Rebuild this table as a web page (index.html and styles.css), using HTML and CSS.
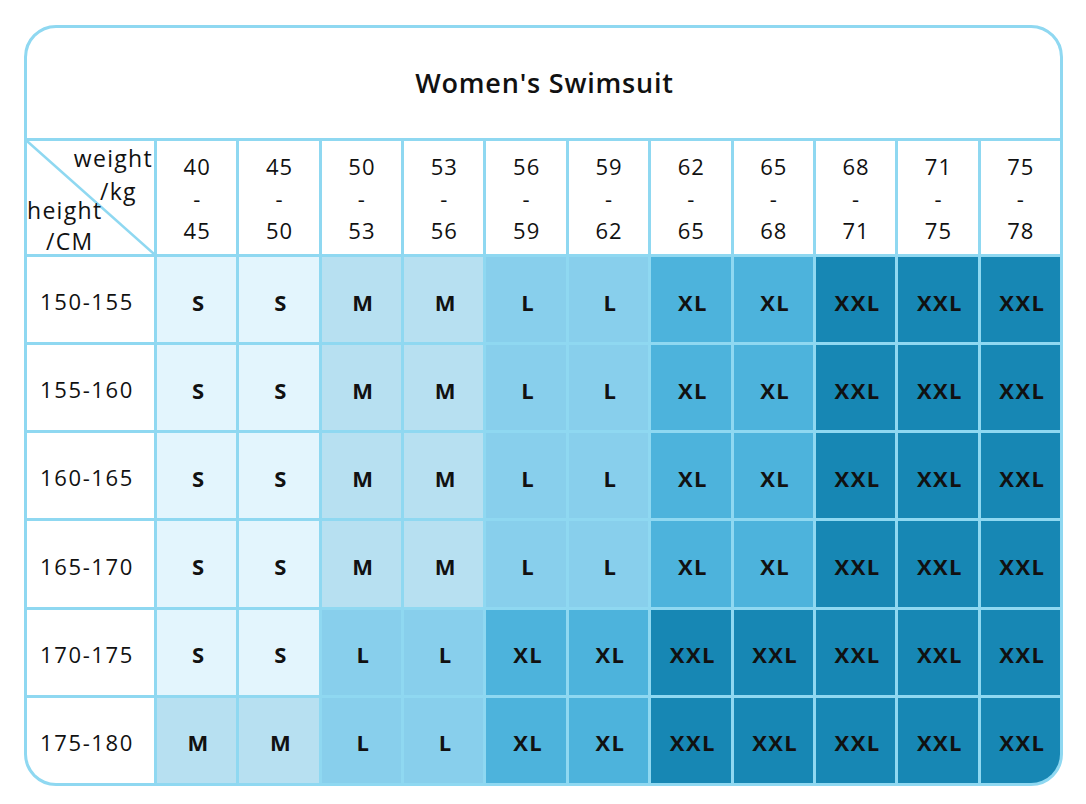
FILE: index.html
```html
<!DOCTYPE html>
<html>
<head>
<meta charset="utf-8">
<link rel="stylesheet" href="styles.css">
</head>
<body>
<div class="chart">
  <div class="title">Women's Swimsuit</div>
  <div class="corner">
    <svg class="diag" viewBox="0 0 100 100" preserveAspectRatio="none"><line x1="0" y1="0" x2="100" y2="100" stroke="#8fd8f1" stroke-width="2.5" vector-effect="non-scaling-stroke"/></svg>
    <span class="c-weight">weight</span>
    <span class="c-kg">/kg</span>
    <span class="c-height">height</span>
    <span class="c-cm">/CM</span>
  </div>
  <div class="hd"><span>40</span><span>-</span><span>45</span></div>
  <div class="hd"><span>45</span><span>-</span><span>50</span></div>
  <div class="hd"><span>50</span><span>-</span><span>53</span></div>
  <div class="hd"><span>53</span><span>-</span><span>56</span></div>
  <div class="hd"><span>56</span><span>-</span><span>59</span></div>
  <div class="hd"><span>59</span><span>-</span><span>62</span></div>
  <div class="hd"><span>62</span><span>-</span><span>65</span></div>
  <div class="hd"><span>65</span><span>-</span><span>68</span></div>
  <div class="hd"><span>68</span><span>-</span><span>71</span></div>
  <div class="hd"><span>71</span><span>-</span><span>75</span></div>
  <div class="hd"><span>75</span><span>-</span><span>78</span></div>

  <div class="rl">150-155</div>
  <div class="c s">S</div><div class="c s">S</div><div class="c m">M</div><div class="c m">M</div><div class="c l">L</div><div class="c l">L</div><div class="c xl">XL</div><div class="c xl">XL</div><div class="c xxl">XXL</div><div class="c xxl">XXL</div><div class="c xxl">XXL</div>

  <div class="rl">155-160</div>
  <div class="c s">S</div><div class="c s">S</div><div class="c m">M</div><div class="c m">M</div><div class="c l">L</div><div class="c l">L</div><div class="c xl">XL</div><div class="c xl">XL</div><div class="c xxl">XXL</div><div class="c xxl">XXL</div><div class="c xxl">XXL</div>

  <div class="rl">160-165</div>
  <div class="c s">S</div><div class="c s">S</div><div class="c m">M</div><div class="c m">M</div><div class="c l">L</div><div class="c l">L</div><div class="c xl">XL</div><div class="c xl">XL</div><div class="c xxl">XXL</div><div class="c xxl">XXL</div><div class="c xxl">XXL</div>

  <div class="rl">165-170</div>
  <div class="c s">S</div><div class="c s">S</div><div class="c m">M</div><div class="c m">M</div><div class="c l">L</div><div class="c l">L</div><div class="c xl">XL</div><div class="c xl">XL</div><div class="c xxl">XXL</div><div class="c xxl">XXL</div><div class="c xxl">XXL</div>

  <div class="rl">170-175</div>
  <div class="c s">S</div><div class="c s">S</div><div class="c l">L</div><div class="c l">L</div><div class="c xl">XL</div><div class="c xl">XL</div><div class="c xxl">XXL</div><div class="c xxl">XXL</div><div class="c xxl">XXL</div><div class="c xxl">XXL</div><div class="c xxl">XXL</div>

  <div class="rl">175-180</div>
  <div class="c m">M</div><div class="c m">M</div><div class="c l">L</div><div class="c l">L</div><div class="c xl">XL</div><div class="c xl">XL</div><div class="c xxl">XXL</div><div class="c xxl">XXL</div><div class="c xxl">XXL</div><div class="c xxl">XXL</div><div class="c xxl">XXL</div>
</div>
</body>
</html>
```

FILE: styles.css
```css
html, body {
  margin: 0;
  padding: 0;
  background: #ffffff;
}

body {
  padding: 25px 0 0 24px;
  font-family: "Open Sans", "Noto Sans", sans-serif;
  color: #111111;
}

.chart {
  width: 1039px;
  height: 761px;
  box-sizing: border-box;
  border: 3px solid #8fd8f1;
  border-radius: 32px;
  overflow: hidden;
  background: #8fd8f1;
  display: grid;
  grid-template-columns: 127px repeat(11, 1fr);
  grid-template-rows: 110px 113px repeat(6, 1fr);
  gap: 3px;
}

.title {
  grid-column: 1 / -1;
  background: #ffffff;
  display: flex;
  align-items: center;
  justify-content: center;
  font-size: 27px;
  font-weight: 600;
  letter-spacing: 0.8px;
  padding-bottom: 2px;
  padding-left: 2px;
}

.corner {
  position: relative;
  background: #ffffff;
  font-size: 23px;
  letter-spacing: 1.3px;
}

.diag {
  position: absolute;
  left: 0;
  top: 0;
  width: 100%;
  height: 100%;
}

.corner span {
  position: absolute;
  line-height: 1;
}

.c-weight { right: 1px; top: 6px; }
.c-kg { left: 73px; top: 39px; }
.c-height { left: 0; top: 58px; }
.c-cm { left: 19px; top: 89px; }

.hd {
  background: #ffffff;
  display: flex;
  flex-direction: column;
  align-items: center;
  justify-content: center;
  font-size: 22px;
  line-height: 32px;
  letter-spacing: 1px;
  padding-top: 1px;
  padding-left: 1px;
}

.rl {
  background: #ffffff;
  display: flex;
  align-items: center;
  justify-content: center;
  font-size: 22px;
  letter-spacing: 1.6px;
  padding-right: 7px;
  padding-top: 3px;
}

.c {
  display: flex;
  align-items: center;
  justify-content: center;
  font-size: 22px;
  font-weight: 700;
  letter-spacing: 1.4px;
  padding-top: 4px;
  padding-left: 4px;
}

.s { background: #e3f5fd; }
.m { background: #b7e0f1; }
.l { background: #88cfec; }
.xl { background: #4db3dc; }
.xxl { background: #1787b4; }
```
